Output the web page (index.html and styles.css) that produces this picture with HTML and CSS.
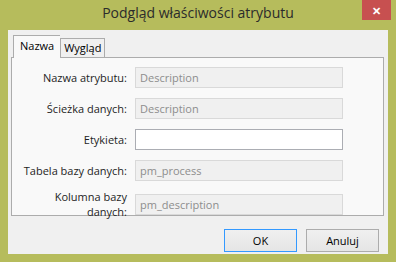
FILE: index.html
```html
<!DOCTYPE html>
<html lang="pl">
<head>
    <meta charset="UTF-8">
    <title>Podgląd właściwości atrybutu</title>
    <link rel="stylesheet" href="styles.css">
</head>
<body>
    <div class="window">
        <div class="titlebar">
            <span class="title">Podgląd właściwości atrybutu</span>
            <span class="close-btn">&#x2715;</span>
        </div>
        <div class="client">
            <div class="tabs">
                <div class="tab active">Nazwa</div>
                <div class="tab">Wygląd</div>
            </div>
            <div class="tab-panel">
                <div class="form-row">
                    <label>Nazwa atrybutu:</label>
                    <div class="field disabled">Description</div>
                </div>
                <div class="form-row">
                    <label>Ścieżka danych:</label>
                    <div class="field disabled">Description</div>
                </div>
                <div class="form-row">
                    <label>Etykieta:</label>
                    <div class="field"></div>
                </div>
                <div class="form-row">
                    <label>Tabela bazy danych:</label>
                    <div class="field disabled">pm_process</div>
                </div>
                <div class="form-row two-line">
                    <label>Kolumna bazy<br>danych:</label>
                    <div class="field disabled">pm_description</div>
                </div>
            </div>
            <div class="buttons">
                <div class="btn default">OK</div>
                <div class="btn">Anuluj</div>
            </div>
        </div>
    </div>
</body>
</html>
```

FILE: styles.css
```css
body {
    margin: 0;
    font-family: "Open Sans", "Noto Sans", sans-serif;
    font-size: 11px;
    color: #000;
}
.window {
    width: 396px;
    height: 262px;
    background-color: #b6bc5c;
    display: flex;
    flex-direction: column;
    box-sizing: border-box;
}
.titlebar {
    position: relative;
    height: 30px;
    display: flex;
    align-items: center;
    justify-content: center;
}
.title {
    font-size: 14px;
    color: #2b2b2b;
    margin-top: -5px;
}
.close-btn {
    position: absolute;
    top: 0;
    left: 362px;
    width: 29px;
    height: 20px;
    background-color: #c75050;
    color: #fff;
    font-size: 11px;
    font-weight: bold;
    display: flex;
    align-items: center;
    justify-content: center;
}
.client {
    margin: 0 8px 8px;
    flex: 1;
    background-color: #f0f0f0;
    padding: 5px 4px 0 3px;
    display: flex;
    flex-direction: column;
}
.tabs {
    display: flex;
    align-items: flex-end;
    padding-left: 2px;
    height: 22px;
    position: relative;
    z-index: 1;
}
.tab {
    border: 1px solid #acacac;
    border-bottom: none;
    background-color: #f0f0f0;
    height: 18px;
    line-height: 17px;
    padding: 0 3px;
}
.tab.active {
    background-color: #f9f9f9;
    height: 22px;
    line-height: 20px;
    padding: 0 6px;
    margin-bottom: -1px;
    border-right: none;
}
.tab-panel {
    border: 1px solid #acacac;
    background-color: #f9f9f9;
    height: 159px;
    padding-top: 9px;
    box-sizing: border-box;
    display: flex;
    flex-direction: column;
    gap: 10px;
}
.form-row {
    display: grid;
    grid-template-columns: 115px 208px;
    column-gap: 8px;
    align-items: center;
}
.form-row label {
    text-align: right;
    color: #1e1e1e;
    line-height: 15px;
}
.field {
    height: 21px;
    box-sizing: border-box;
    border: 1px solid #abadb3;
    background-color: #fff;
    padding: 0 4px;
    line-height: 19px;
}
.field.disabled {
    border-color: #d9d9d9;
    background-color: #f0f0f0;
    color: #8d8d8d;
}
.two-line {
    margin-top: -2px;
}
.buttons {
    display: flex;
    justify-content: flex-end;
    gap: 9px;
    padding: 13px 5px 0 0;
}
.btn {
    width: 73px;
    height: 23px;
    box-sizing: border-box;
    border: 1px solid #acacac;
    background: linear-gradient(#f0f0f0, #e5e5e5);
    text-align: center;
    line-height: 21px;
}
.btn.default {
    border-color: #3399ff;
}
```
